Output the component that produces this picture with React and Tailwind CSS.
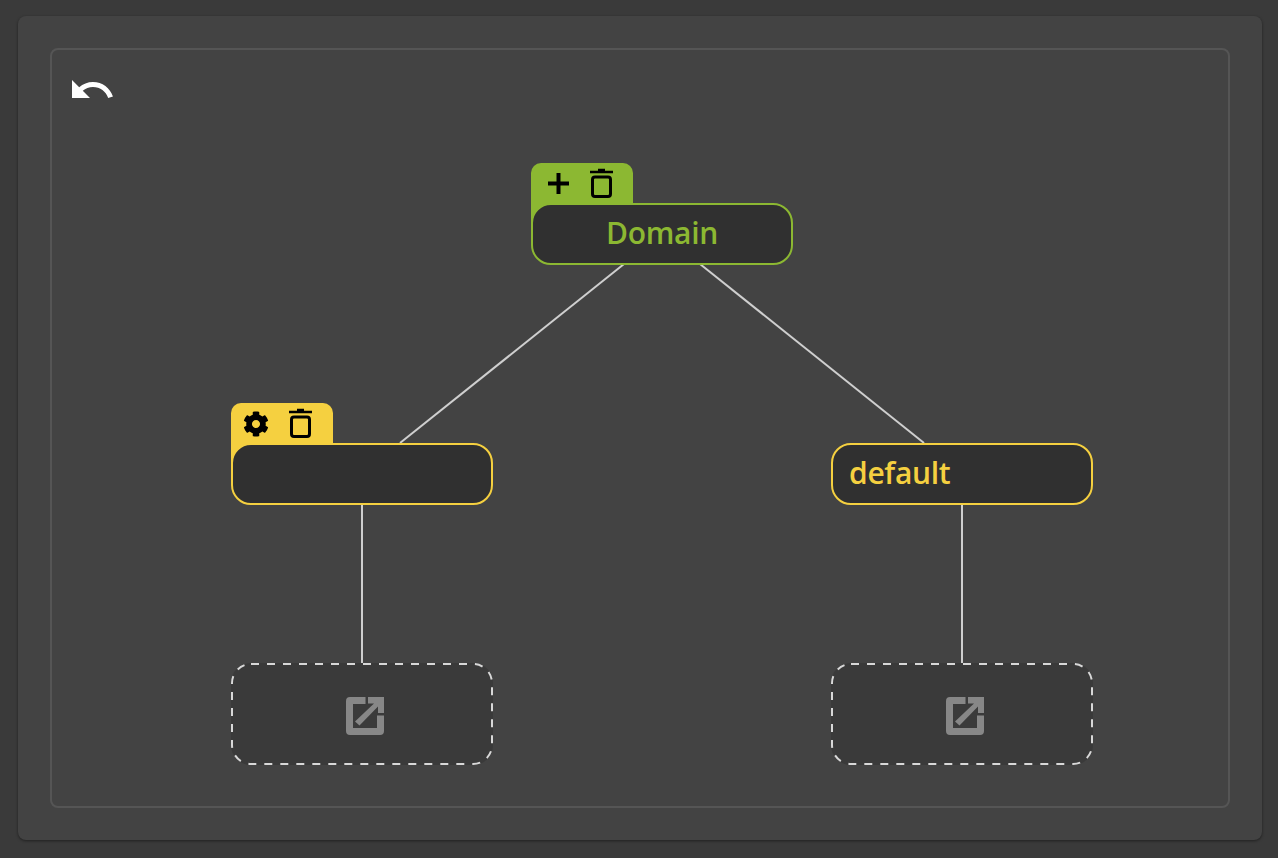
import { FaCog } from "react-icons/fa";

const TrashIcon = () => (
  <svg width="24" height="30" viewBox="0 0 24 30" className="block">
    <path d="M8 2h7M0 4h23" stroke="#000" strokeWidth="2.6" fill="none" />
    <rect x="2.5" y="9" width="18" height="19.5" rx="2.5" stroke="#000" strokeWidth="3" fill="none" />
  </svg>
);

const PlusIcon = () => (
  <svg width="21" height="21" viewBox="0 0 21 21" className="block">
    <path d="M10.5 0v21M0 10.5h21" stroke="#000" strokeWidth="4" fill="none" />
  </svg>
);

const OpenIcon = () => (
  <svg width="38" height="38" viewBox="0 0 38 38" className="block">
    <path
      d="M4 0H19.5V7H7V31H31V18.5H38V34a4 4 0 0 1-4 4H4a4 4 0 0 1-4-4V4a4 4 0 0 1 4-4z"
      fill="#878787"
    />
    <path d="M22 0H38V16H32V9.5L13.5 28.5L9 24.5L28 6.5H22z" fill="#878787" />
  </svg>
);

const UndoIcon = () => (
  <svg width="48" height="48" viewBox="0 0 24 24" className="block">
    <path
      fill="#fff"
      d="M12.5 8c-2.65 0-5.05.99-6.9 2.6L2 7v9h9l-3.62-3.62c1.39-1.16 3.16-1.88 5.12-1.88 3.54 0 6.55 2.31 7.6 5.5l2.37-.78C21.08 11.03 17.15 8 12.5 8z"
    />
  </svg>
);

const Tab = ({ color, children }) => (
  <div className={`absolute left-0 top-[-40px] w-[102px] h-[70px] rounded-t-[10px] flex items-start ${color}`}>
    {children}
  </div>
);

const Node = ({ pos, border, text, align, label, children }) => (
  <div className={`absolute w-[262px] h-[62px] ${pos}`}>
    {children}
    <div
      className={`relative w-full h-full rounded-[20px] border-2 bg-[#303030] flex items-center px-4 pb-[2px] text-[30px] font-semibold leading-none tracking-[-0.3px] ${border} ${text} ${align}`}
    >
      {label}
    </div>
  </div>
);

const Target = ({ pos }) => (
  <div className={`absolute w-[262px] h-[102px] rounded-[20px] bg-[#3a3a3a] flex items-center justify-center pt-1 pl-[5px] ${pos}`}>
    <svg width="262" height="102" className="absolute left-0 top-0" fill="none">
      <rect x="1" y="1" width="260" height="100" rx="19" stroke="#d8d8d8" strokeWidth="2" strokeDasharray="8 8" />
    </svg>
    <OpenIcon />
  </div>
);

export default function App() {
  return (
    <div className="h-[858px] bg-[#3a3a3a] pt-4 pl-[18px] pr-4 font-['Open_Sans',sans-serif] overflow-hidden">
      <div className="h-[824px] rounded-lg bg-[#434343] p-8 shadow-[0_1px_3px_rgba(0,0,0,0.45)]">
        <div className="relative h-[760px] rounded-lg border-2 border-[#555555]">
          <svg width="1176" height="756" className="absolute left-0 top-0" fill="none" stroke="#cfcfcf" strokeWidth="2">
            <path d="M572 214L348 393" />
            <path d="M648 214L872 393" />
            <path d="M310 455V613" />
            <path d="M910 455V613" />
          </svg>

          <button className="absolute left-[16px] top-[16px]">
            <UndoIcon />
          </button>

          <Node pos="left-[479px] top-[153px]" border="border-[#8cb832]" text="text-[#8cb832]" align="justify-center" label="Domain">
            <Tab color="bg-[#8cb832]">
              <span className="ml-[17px] mt-[10px]"><PlusIcon /></span>
              <span className="ml-[21px] mt-[5px]"><TrashIcon /></span>
            </Tab>
          </Node>

          <Node pos="left-[179px] top-[393px]" border="border-[#f5d040]" text="text-[#f5d040]" align="justify-start" label="">
            <Tab color="bg-[#f5d040]">
              <span className="ml-[12px] mt-[8px]"><FaCog size={26} color="#000" className="block" /></span>
              <span className="ml-[20px] mt-[5px]"><TrashIcon /></span>
            </Tab>
          </Node>

          <Node pos="left-[779px] top-[393px]" border="border-[#f5d040]" text="text-[#f5d040]" align="justify-start" label="default" />

          <Target pos="left-[179px] top-[613px]" />
          <Target pos="left-[779px] top-[613px]" />
        </div>
      </div>
    </div>
  );
}
